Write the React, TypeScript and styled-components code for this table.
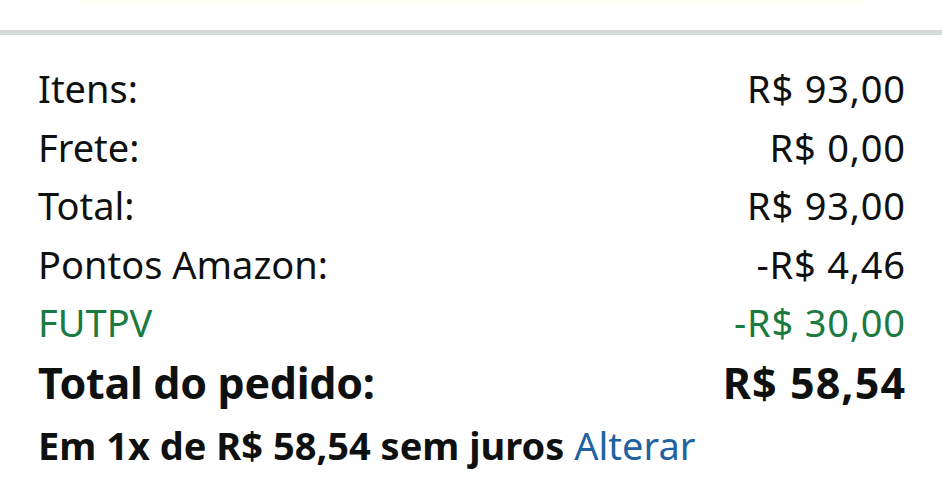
import React from "react";
import styled, { createGlobalStyle } from "styled-components";

const Global = createGlobalStyle`
  html, body { margin: 0; padding: 0; background: #ffffff; }
  body { font-family: "Noto Sans", "Open Sans", sans-serif; color: #0f1111; }
`;

const Page = styled.div`
  width: 942px;
  height: 500px;
  overflow: hidden;
  background: #ffffff;
`;

const TopFade = styled.div`
  height: 30px;
  background: linear-gradient(to bottom, #fefef6 0px, #ffffff 9px);
  margin: 0 77px 0 78px;
`;

const Divider = styled.div`
  height: 5px;
  background: #d5d9d9;
`;

const Summary = styled.div`
  padding: 24px 37px 0 38px;
  display: flex;
  flex-direction: column;
`;

const Row = styled.div<{ $tone?: "normal" | "green" }>`
  display: flex;
  justify-content: space-between;
  align-items: baseline;
  font-size: 38px;
  line-height: 58.6px;
  color: ${(p) => (p.$tone === "green" ? "#1b7a3f" : "#0f1111")};
`;

const Value = styled.span`
  letter-spacing: 0.8px;
  margin-right: -0.8px;
`;

const TotalRow = styled(Row)`
  font-size: 43px;
  font-weight: 700;
  line-height: 62.6px;
`;

const TotalLabel = styled.span`
  letter-spacing: -0.3px;
`;

const TotalValue = styled.span`
  letter-spacing: 1.1px;
  margin-right: -1.1px;
`;

const Installments = styled.div`
  font-size: 38px;
  font-weight: 700;
  line-height: 61.4px;
  color: #0f1111;
`;

const Link = styled.a`
  font-weight: 400;
  color: #2162a1;
  text-decoration: none;
`;

const rows: { label: string; value: string; tone?: "normal" | "green" }[] = [
  { label: "Itens:", value: "R$ 93,00" },
  { label: "Frete:", value: "R$ 0,00" },
  { label: "Total:", value: "R$ 93,00" },
  { label: "Pontos Amazon:", value: "-R$ 4,46" },
  { label: "FUTPV", value: "-R$ 30,00", tone: "green" },
];

export default function App() {
  return (
    <Page>
      <Global />
      <TopFade />
      <Divider />
      <Summary>
        {rows.map((r) => (
          <Row key={r.label} $tone={r.tone}>
            <span>{r.label}</span>
            <Value>{r.value}</Value>
          </Row>
        ))}
        <TotalRow>
          <TotalLabel>Total do pedido:</TotalLabel>
          <TotalValue>R$ 58,54</TotalValue>
        </TotalRow>
        <Installments>
          Em 1x de R$ 58,54 sem juros <Link href="#">Alterar</Link>
        </Installments>
      </Summary>
    </Page>
  );
}
